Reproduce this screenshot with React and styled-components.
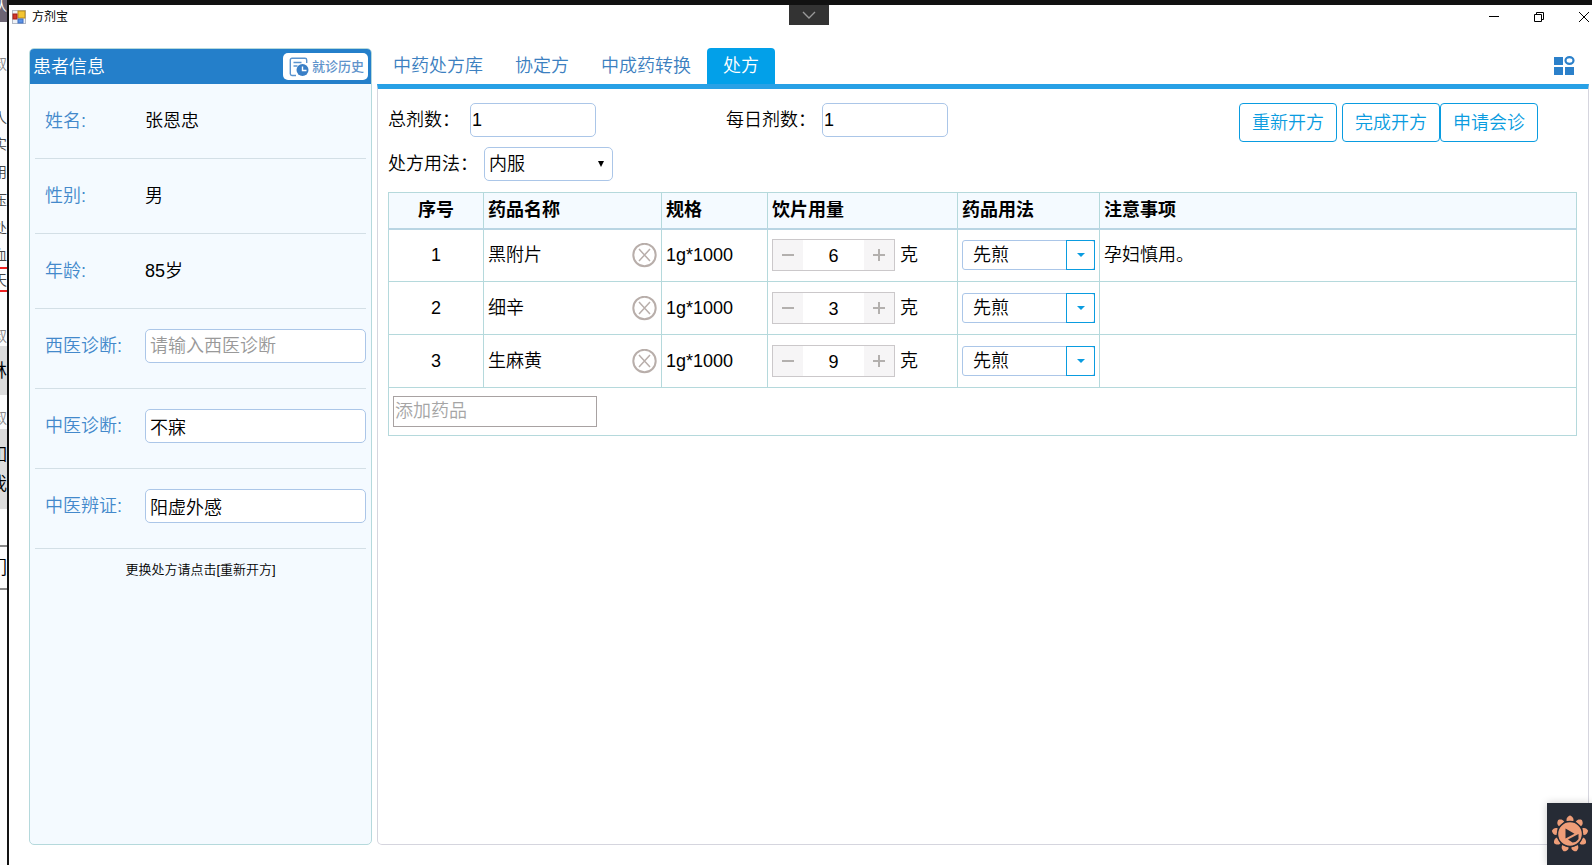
import React from 'react';
import styled, { createGlobalStyle } from 'styled-components';

const GlobalStyle = createGlobalStyle`
  * {
    box-sizing: border-box;
  }

  body {
    margin: 0;
    background: #fff;
  }

  body, button, input, select {
    font-family: "Liberation Sans", "Noto Sans CJK SC", sans-serif;
    font-size: 18px;
    font-weight: 350;
    line-height: 26px;
    color: #000;
  }

  button {
    padding: 0;
    border: none;
    background: none;
  }
`;

/* Desktop: a slice of the window behind, then the app window */

const Desktop = styled.div`
  display: grid;
  grid-template-columns: 7px 1fr;
  height: 100vh;
  overflow: hidden;
`;

const BackWindow = styled.aside`
  background: #fcfcfc;
  overflow: hidden;
`;

const BackLine = styled.div`
  display: flex;
  align-items: center;
  justify-content: flex-end;
  height: ${(props) => props.$height}px;
  padding-top: ${(props) => props.$top || 0}px;
  padding-bottom: ${(props) => props.$bottom || 0}px;
  background: ${(props) => props.$bg || 'transparent'};
  border-bottom: ${(props) => (props.$line ? `2px solid ${props.$line}` : 'none')};
  color: ${(props) => props.$color || '#444'};
  font-size: ${(props) => props.$size || 14}px;
  line-height: 20px;
  white-space: nowrap;
`;

const Window = styled.div`
  position: relative;
  display: flex;
  flex-direction: column;
  min-width: 0;
  border-top: 5px solid #111;
  border-left: 2px solid #111;
  background: #fff;
`;

const TitleBar = styled.header`
  display: flex;
  align-items: center;
  height: 23px;
  padding-left: 3px;
`;

const AppTitle = styled.h1`
  flex: 1;
  margin: 0 0 0 6px;
  font-size: 12px;
  font-weight: 400;
  line-height: 20px;
  color: #000;
`;

const WindowButton = styled.button`
  display: flex;
  align-items: center;
  justify-content: center;
  width: 45px;
  height: 20px;

  &:last-child {
    justify-content: flex-start;
    width: 31px;
    padding-left: 18px;
  }
`;

const PullDown = styled.button`
  position: absolute;
  top: 0;
  left: 50%;
  display: flex;
  align-items: center;
  justify-content: center;
  width: 40px;
  height: 20px;
  margin-left: -12px;
  background: #333;
`;

const Main = styled.main`
  display: flex;
  flex: 1;
  gap: 5px;
  padding: 20px 3px 20px 20px;
`;

/* Patient panel */

const PatientPanel = styled.section`
  flex: 0 0 343px;
  min-width: 0;
  border: 1px solid #b5d9dc;
  border-radius: 5px;
  background: #f4faff;
`;

const PanelHeader = styled.div`
  display: flex;
  align-items: center;
  justify-content: space-between;
  height: 35px;
  padding: 0 3px;
  border-radius: 4px 4px 0 0;
  background: #247fca;
`;

const PanelTitle = styled.h2`
  margin: 0;
  font-size: 18px;
  font-weight: 350;
  color: #fff;
`;

const HistoryButton = styled.button`
  display: flex;
  align-items: center;
  gap: 3px;
  height: 27px;
  padding: 0 4px 0 6px;
  border-radius: 5px;
  background: #fff;
  color: #5f93cb;
  font-size: 13px;
  font-weight: 500;
`;

const PatientRow = styled.div`
  display: flex;
  align-items: center;
  margin: 0 5px;
  padding: 20px 0 ${(props) => (props.$editable ? 25 : 20)}px 10px;
  border-bottom: 1px solid #d3dfe6;
`;

const PatientLabel = styled.label`
  flex: 0 0 100px;
  line-height: 34px;
  color: #4389cb;
`;

const TextInput = styled.input`
  flex: ${(props) => (props.$width ? 'none' : 1)};
  width: ${(props) => (props.$width ? `${props.$width}px` : 'auto')};
  min-width: 0;
  height: 34px;
  padding: 0 ${(props) => props.$pad || 4}px;
  border: 1px solid #abc6e8;
  border-radius: 5px;
  background: #fff;

  &::placeholder {
    color: #999;
  }
`;

const PatientNote = styled.p`
  margin: 8px 0 0;
  font-size: 13px;
  text-align: center;
`;

/* Prescription area */

const Workspace = styled.section`
  display: flex;
  flex: 1;
  flex-direction: column;
  min-width: 0;
`;

const TabBar = styled.nav`
  display: flex;
  align-items: flex-end;
  height: 36px;
`;

const Tab = styled.a`
  height: 36px;
  padding: 0 16px;
  border-radius: 4px 4px 0 0;
  background: ${(props) => (props.$active ? '#02a0e9' : 'transparent')};
  color: ${(props) => (props.$active ? '#fff' : '#3c80c0')};
  line-height: 36px;
  text-decoration: none;
`;

const GridButton = styled.button`
  display: flex;
  margin: 0 14px 9px auto;
`;

const TabPanel = styled.div`
  flex: 1;
  border: 1px solid #d5d5de;
  border-top: 5px solid #28a1e6;
  border-radius: 0 0 5px 5px;
  padding: 14px 11px 0 10px;
`;

const Toolbar = styled.div`
  display: flex;
  justify-content: space-between;
  padding-right: 39px;
`;

const Fields = styled.div`
  display: grid;
  grid-template-columns: 338px auto;
  row-gap: 10px;
  margin-bottom: 11px;
`;

const Field = styled.div`
  display: flex;
  align-items: center;
  gap: 6px;
`;

const FieldLabel = styled.label`
  min-width: 76px;
  line-height: 34px;
  white-space: nowrap;
`;

const SelectBox = styled.div`
  position: relative;
  width: ${(props) => props.$width}px;

  select {
    display: block;
    width: 100%;
    height: ${(props) => (props.$boxed ? 30 : 34)}px;
    padding: 0 ${(props) => (props.$boxed ? 10 : 4)}px;
    border: 1px solid #abc6e8;
    border-radius: ${(props) => (props.$boxed ? 3 : 5)}px;
    background: #fff;
    appearance: none;
  }
`;

const SelectArrow = styled.span`
  position: absolute;
  top: 0;
  right: 0;
  bottom: 0;
  display: flex;
  align-items: center;
  justify-content: center;
  width: 29px;
  border: ${(props) => (props.$boxed ? '1px solid #0a9ce0' : 'none')};
  color: ${(props) => (props.$boxed ? '#0a9ce0' : '#000')};
  padding-left: ${(props) => (props.$boxed ? 0 : 10)}px;
  padding-right: ${(props) => (props.$boxed ? 0 : 6)}px;
  pointer-events: none;
`;

const Actions = styled.div`
  display: flex;
  align-items: flex-start;
`;

const ActionButton = styled.button`
  height: 39px;
  padding: 0 12px;
  border: 1px solid #0a9ce0;
  border-radius: 4px;
  color: #0a9ce0;

  &:first-child {
    margin-right: 5px;
  }
`;

const DrugTable = styled.table`
  width: 100%;
  table-layout: fixed;
  border-collapse: collapse;

  th, td {
    border: 1px solid #b5d9dc;
    padding: 0 4px;
    text-align: left;
  }

  th {
    height: 36px;
    border-bottom: 2px solid #b9d5e3;
    background: #f4faff;
    font-weight: 700;
  }

  td {
    height: 53px;
  }

  th:first-child, td:first-child {
    text-align: center;
  }

  tfoot td, tfoot td:first-child {
    height: 48px;
    text-align: left;
  }
`;

const DrugName = styled.div`
  display: flex;
  align-items: center;
  justify-content: space-between;

  button {
    display: flex;
  }
`;

const Dose = styled.div`
  display: flex;
  align-items: center;
  gap: 5px;
`;

const Stepper = styled.div`
  display: flex;
  width: 123px;
  height: 32px;
  border: 1px solid #cbc8ca;

  button {
    display: flex;
    align-items: center;
    justify-content: center;
    width: 30px;
    background: #f6f5f6;
  }

  input {
    flex: 1;
    min-width: 0;
    padding: 2px 0 0;
    border: none;
    text-align: center;
  }
`;

const AddInput = styled.input`
  display: block;
  width: 204px;
  height: 31px;
  padding: 0 1px;
  border: 1px solid #a8a2a2;

  &::placeholder {
    color: #a5a5a5;
  }
`;

const Recorder = styled.button`
  position: absolute;
  right: 0;
  bottom: 0;
  display: flex;
  align-items: center;
  justify-content: center;
  width: 45px;
  height: 62px;
  background: #262b35;
  box-shadow: 0 0 8px rgba(0, 0, 0, 0.2);
`;

const backLines = [
  { text: '队', height: 22, bottom: 12, bg: '#6c6473', color: '#fff', size: 16 },
  { text: '叔', height: 84, color: '#888' },
  { text: '人', height: 24 },
  { text: '实', height: 28 },
  { text: '用', height: 28 },
  { text: '压', height: 28 },
  { text: '处', height: 28 },
  { text: '血', height: 27, line: '#e22' },
  { text: '天', height: 23, line: '#e22' },
  { text: '叔', height: 54, top: 34, color: '#888' },
  { text: '林', height: 49, bg: '#dcdcdc', size: 18, color: '#000' },
  { text: '叔', height: 34, top: 12, color: '#888' },
  { text: '如', height: 41, top: 11, bg: '#dcdcdc', size: 18, color: '#000' },
  { text: '我', height: 39, bottom: 11, bg: '#dcdcdc', size: 18, color: '#000' },
  { text: '。', height: 38, line: '#888' },
  { text: '们', height: 43, line: '#888', size: 18, color: '#000' },
];

const patientFacts = [
  { label: '姓名:', value: '张恩忠' },
  { label: '性别:', value: '男' },
  { label: '年龄:', value: '85岁' },
];

const diagnoses = [
  { id: 'western', label: '西医诊断:', value: '', placeholder: '请输入西医诊断' },
  { id: 'chinese', label: '中医诊断:', value: '不寐' },
  { id: 'pattern', label: '中医辨证:', value: '阳虚外感' },
];

const tabs = ['中药处方库', '协定方', '中成药转换', '处方'];

const drugs = [
  { name: '黑附片', spec: '1g*1000', dose: 6, usage: '先煎', note: '孕妇慎用。' },
  { name: '细辛', spec: '1g*1000', dose: 3, usage: '先煎', note: '' },
  { name: '生麻黄', spec: '1g*1000', dose: 9, usage: '先煎', note: '' },
];

const AppIcon = () => (
  <svg width="14" height="14" viewBox="0 0 14 14">
    <rect x="0.5" y="0.5" width="13" height="13" fill="#eef1f6" stroke="#b4bac6" />
    <rect x="6" y="1" width="7" height="7" fill="#f3c532" stroke="#b98a18" />
    <rect x="1" y="4" width="4" height="5" fill="#d33528" stroke="#a3201a" />
    <rect x="6" y="9" width="5" height="4" fill="#5b92e6" stroke="#3f6fc0" />
  </svg>
);

const HistoryIcon = () => (
  <svg width="20" height="20" viewBox="0 0 20 20" fill="none" stroke="#5b94cf" strokeWidth="1.4">
    <path d="M7 18.5H3a1.700 1.700 0 0 1-1.700-1.700V3A1.700 1.700 0 0 1 3 1.300h13A1.700 1.700 0 0 1 17.700 3v3" />
    <path d="M4.500 5.500h8M4.500 9h4" />
    <circle cx="13.5" cy="13" r="6" fill="#3a7fc6" stroke="none" />
    <path d="M13.500 9.500v4h4" stroke="#fff" />
  </svg>
);

const GridIcon = () => (
  <svg width="21" height="19" viewBox="0 0 21 19" fill="#2b80ca">
    <rect x="0" y="1" width="9" height="8" />
    <rect x="0" y="11" width="9" height="8" />
    <rect x="11" y="11" width="9" height="8" />
    <ellipse cx="15.5" cy="4.5" rx="4" ry="3.3" fill="none" stroke="#2b80ca" strokeWidth="2.2" />
  </svg>
);

const RemoveIcon = () => (
  <svg width="25" height="25" viewBox="0 0 25 25" fill="none" stroke="#b8aeaa">
    <circle cx="12.5" cy="12" r="11.2" strokeWidth="2" />
    <path d="M7 6l11 12M18 6L7 18" strokeWidth="1.5" />
  </svg>
);

const Arrow = ({ width, height }) => (
  <svg width={width} height={height} viewBox="0 0 7 6" preserveAspectRatio="none" fill="currentColor">
    <path d="M0 0h7L3.500 6z" />
  </svg>
);

const FlowerIcon = () => (
  <svg width="38" height="38" viewBox="-19 -19 38 38" fill="#ee9d78">
    {[0, 40, 80, 120, 160, 200, 240, 280, 320].map((angle) => (
      <path
        key={angle}
        transform={`rotate(${angle})`}
        d="M-3.400-13C-4-16-2-17.600 0-18.400C2-17.600 4-16 3.400-13Z"
      />
    ))}
    <circle r="12.5" stroke="#262b35" strokeWidth="1.4" />
    <path d="M-4.500-5.500L4.500-0.300L-4.500 4.500ZM8.500 0V5Q6 8.500 2.500 8.500L-2 5.500Z" fill="#262b35" />
  </svg>
);

const App = () => {
  return (
    <>
      <GlobalStyle />
      <Desktop>
        <BackWindow>
          {backLines.map((line, index) => (
            <BackLine
              key={index}
              $height={line.height}
              $top={line.top}
              $bottom={line.bottom}
              $bg={line.bg}
              $line={line.line}
              $color={line.color}
              $size={line.size}
            >
              {line.text}
            </BackLine>
          ))}
        </BackWindow>

        <Window>
          <TitleBar>
            <AppIcon />
            <AppTitle>方剂宝</AppTitle>
            <WindowButton aria-label="最小化">
              <svg width="10" height="10" stroke="#000"><path d="M0 4.500h10" /></svg>
            </WindowButton>
            <WindowButton aria-label="还原">
              <svg width="10" height="10" fill="none" stroke="#000">
                <path d="M0.500 2.500h7v7h-7zM2.500 2.500v-2h7v7h-2" />
              </svg>
            </WindowButton>
            <WindowButton aria-label="关闭">
              <svg width="11" height="10" stroke="#000"><path d="M0 0l10 10M10 0L0 10" /></svg>
            </WindowButton>
          </TitleBar>
          <PullDown aria-label="展开">
            <svg width="14" height="8" fill="none" stroke="#999" strokeWidth="1.4">
              <path d="M1 1l6 6l6-6" />
            </svg>
          </PullDown>

          <Main>
            <PatientPanel>
              <PanelHeader>
                <PanelTitle>患者信息</PanelTitle>
                <HistoryButton>
                  <HistoryIcon />
                  就诊历史
                </HistoryButton>
              </PanelHeader>
              {patientFacts.map((fact) => (
                <PatientRow key={fact.label}>
                  <PatientLabel as="span">{fact.label}</PatientLabel>
                  <span>{fact.value}</span>
                </PatientRow>
              ))}
              {diagnoses.map((item) => (
                <PatientRow key={item.id} $editable>
                  <PatientLabel htmlFor={item.id}>{item.label}</PatientLabel>
                  <TextInput id={item.id} defaultValue={item.value} placeholder={item.placeholder} />
                </PatientRow>
              ))}
              <PatientNote>更换处方请点击[重新开方]</PatientNote>
            </PatientPanel>

            <Workspace>
              <TabBar>
                {tabs.map((tab) => (
                  <Tab key={tab} href="#" $active={tab === '处方'}>{tab}</Tab>
                ))}
                <GridButton aria-label="菜单">
                  <GridIcon />
                </GridButton>
              </TabBar>

              <TabPanel>
                <Toolbar>
                  <Fields>
                    <Field>
                      <FieldLabel htmlFor="total">总剂数：</FieldLabel>
                      <TextInput id="total" defaultValue="1" $width={126} $pad={1} />
                    </Field>
                    <Field>
                      <FieldLabel htmlFor="daily">每日剂数：</FieldLabel>
                      <TextInput id="daily" defaultValue="1" $width={126} $pad={1} />
                    </Field>
                    <Field>
                      <FieldLabel htmlFor="route">处方用法：</FieldLabel>
                      <SelectBox $width={129}>
                        <select id="route" defaultValue="内服">
                          <option>内服</option>
                        </select>
                        <SelectArrow><Arrow width={6} height={6} /></SelectArrow>
                      </SelectBox>
                    </Field>
                  </Fields>
                  <Actions>
                    <ActionButton>重新开方</ActionButton>
                    <ActionButton>完成开方</ActionButton>
                    <ActionButton>申请会诊</ActionButton>
                  </Actions>
                </Toolbar>

                <DrugTable>
                  <colgroup>
                    <col width="95" />
                    <col width="178" />
                    <col width="106" />
                    <col width="190" />
                    <col width="142" />
                    <col />
                  </colgroup>
                  <thead>
                    <tr>
                      <th>序号</th>
                      <th>药品名称</th>
                      <th>规格</th>
                      <th>饮片用量</th>
                      <th>药品用法</th>
                      <th>注意事项</th>
                    </tr>
                  </thead>
                  <tbody>
                    {drugs.map((drug, index) => (
                      <tr key={drug.name}>
                        <td>{index + 1}</td>
                        <td>
                          <DrugName>
                            {drug.name}
                            <button aria-label={`删除${drug.name}`}><RemoveIcon /></button>
                          </DrugName>
                        </td>
                        <td>{drug.spec}</td>
                        <td>
                          <Dose>
                            <Stepper>
                              <button aria-label="减少">
                                <svg width="12" height="12" stroke="#b3b0ae" strokeWidth="2"><path d="M0 6h12" /></svg>
                              </button>
                              <input aria-label={`${drug.name}用量`} defaultValue={drug.dose} />
                              <button aria-label="增加">
                                <svg width="12" height="12" stroke="#b3b0ae" strokeWidth="2"><path d="M0 6h12M6 0v12" /></svg>
                              </button>
                            </Stepper>
                            克
                          </Dose>
                        </td>
                        <td>
                          <SelectBox $width={133} $boxed>
                            <select aria-label={`${drug.name}用法`} defaultValue={drug.usage}>
                              <option>{drug.usage}</option>
                            </select>
                            <SelectArrow $boxed><Arrow width={8} height={4} /></SelectArrow>
                          </SelectBox>
                        </td>
                        <td>{drug.note}</td>
                      </tr>
                    ))}
                  </tbody>
                  <tfoot>
                    <tr>
                      <td colSpan={6}>
                        <AddInput aria-label="添加药品" placeholder="添加药品" />
                      </td>
                    </tr>
                  </tfoot>
                </DrugTable>
              </TabPanel>
            </Workspace>
          </Main>

          <Recorder aria-label="录制">
            <FlowerIcon />
          </Recorder>
        </Window>
      </Desktop>
    </>
  );
};

export default App;
